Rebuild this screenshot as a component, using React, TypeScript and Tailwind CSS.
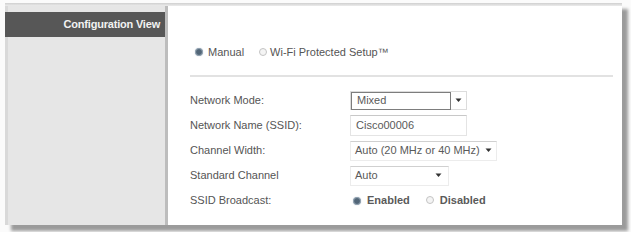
import React from "react";

function Radio({ on }: { on: boolean }) {
  return on ? (
    <span className="inline-block w-[8px] h-[8px] rounded-full bg-[#526678] border border-[#95a5b3] shadow-[0_0_1px_#9ab]" />
  ) : (
    <span className="inline-block w-[8px] h-[8px] rounded-full bg-[#f4f4f4] border border-[#c4c4c4]" />
  );
}

function Arrow() {
  return (
    <svg width="7" height="5" viewBox="0 0 7 5">
      <path d="M0.5 0.5 L6.5 0.5 L3.5 4 Z" fill="#333" />
    </svg>
  );
}

function Row({ label, children }: { label: string; children: React.ReactNode }) {
  return (
    <div className="flex items-center h-[25px]">
      <div className="w-[160px] shrink-0 text-[#555]">{label}</div>
      {children}
    </div>
  );
}

export default function App() {
  return (
    <div
      className="w-[631px] h-[232px] bg-[#fbfbfb] pl-[5px] pt-[3px] overflow-hidden"
      style={{ fontFamily: '"Liberation Sans", Arial, sans-serif' }}
    >
      <div className="w-[617px] h-[222px] flex flex-col shadow-[6px_6px_3px_rgba(0,0,0,0.38)] bg-white">
        <div className="h-[3px] bg-gradient-to-b from-[#cfcfcf] to-[#ececec]" />
        <div className="flex flex-1 min-h-0">
          {/* sidebar */}
          <div className="w-[160px] bg-[#e6e6e6] border-l-[3px] border-[#d9d9d9] pt-[6px]">
            <div className="h-[25px] -ml-[3px] mr-[-3px] bg-[#575757] flex items-center justify-end pr-[8px] text-[#f2f2f2] font-bold text-[11px] tracking-[-0.2px]">
              Configuration View
            </div>
          </div>
          <div className="w-[3px] bg-[#bdbdbd]" />
          {/* main */}
          <div className="flex-1 bg-white pl-[22px] pr-[9px] pt-[38px] text-[11px] text-[#555]">
            <div className="flex items-center h-[16px] pl-[5px]">
              <Radio on />
              <span className="ml-[5px]">Manual</span>
              <span className="ml-[15px]"><Radio on={false} /></span>
              <span className="ml-[3px]">Wi-Fi Protected Setup™</span>
            </div>
            <div className="mt-[15px] h-[2px] bg-[#e2e2e2]" />
            <div className="mt-[11px] flex flex-col">
              <Row label="Network Mode:">
                <div className="flex items-center w-[117px] h-[19px] border border-[#dcdcdc]">
                  <div className="w-[100px] h-[18px] border border-[#7d7d7d] flex items-center pl-[5px] text-[#5a5a5a]">
                    Mixed
                  </div>
                  <div className="flex-1 flex justify-center">
                    <Arrow />
                  </div>
                </div>
              </Row>
              <Row label="Network Name (SSID):">
                <div className="w-[117px] h-[21px] border border-[#e4e4e4] border-t-[#c8c8c8] flex items-center pl-[5px] text-[#5a5a5a]">
                  Cisco00006
                </div>
              </Row>
              <Row label="Channel Width:">
                <div className="w-[147px] h-[20px] border border-[#ececec] border-t-[#d0d0d0] flex items-center pl-[4px] text-[#5a5a5a]">
                  <span className="flex-1">Auto (20 MHz or 40 MHz)</span>
                  <span className="pr-[4px]"><Arrow /></span>
                </div>
              </Row>
              <Row label="Standard Channel">
                <div className="w-[99px] h-[20px] border border-[#ececec] border-t-[#d0d0d0] flex items-center pl-[4px] text-[#5a5a5a]">
                  <span className="flex-1">Auto</span>
                  <span className="pr-[6px]"><Arrow /></span>
                </div>
              </Row>
              <Row label="SSID Broadcast:">
                <div className="flex items-center pl-[3px] font-bold text-[#5a5a5a]">
                  <Radio on />
                  <span className="ml-[6px]">Enabled</span>
                  <span className="ml-[16px]"><Radio on={false} /></span>
                  <span className="ml-[6px]">Disabled</span>
                </div>
              </Row>
            </div>
          </div>
        </div>
      </div>
    </div>
  );
}
